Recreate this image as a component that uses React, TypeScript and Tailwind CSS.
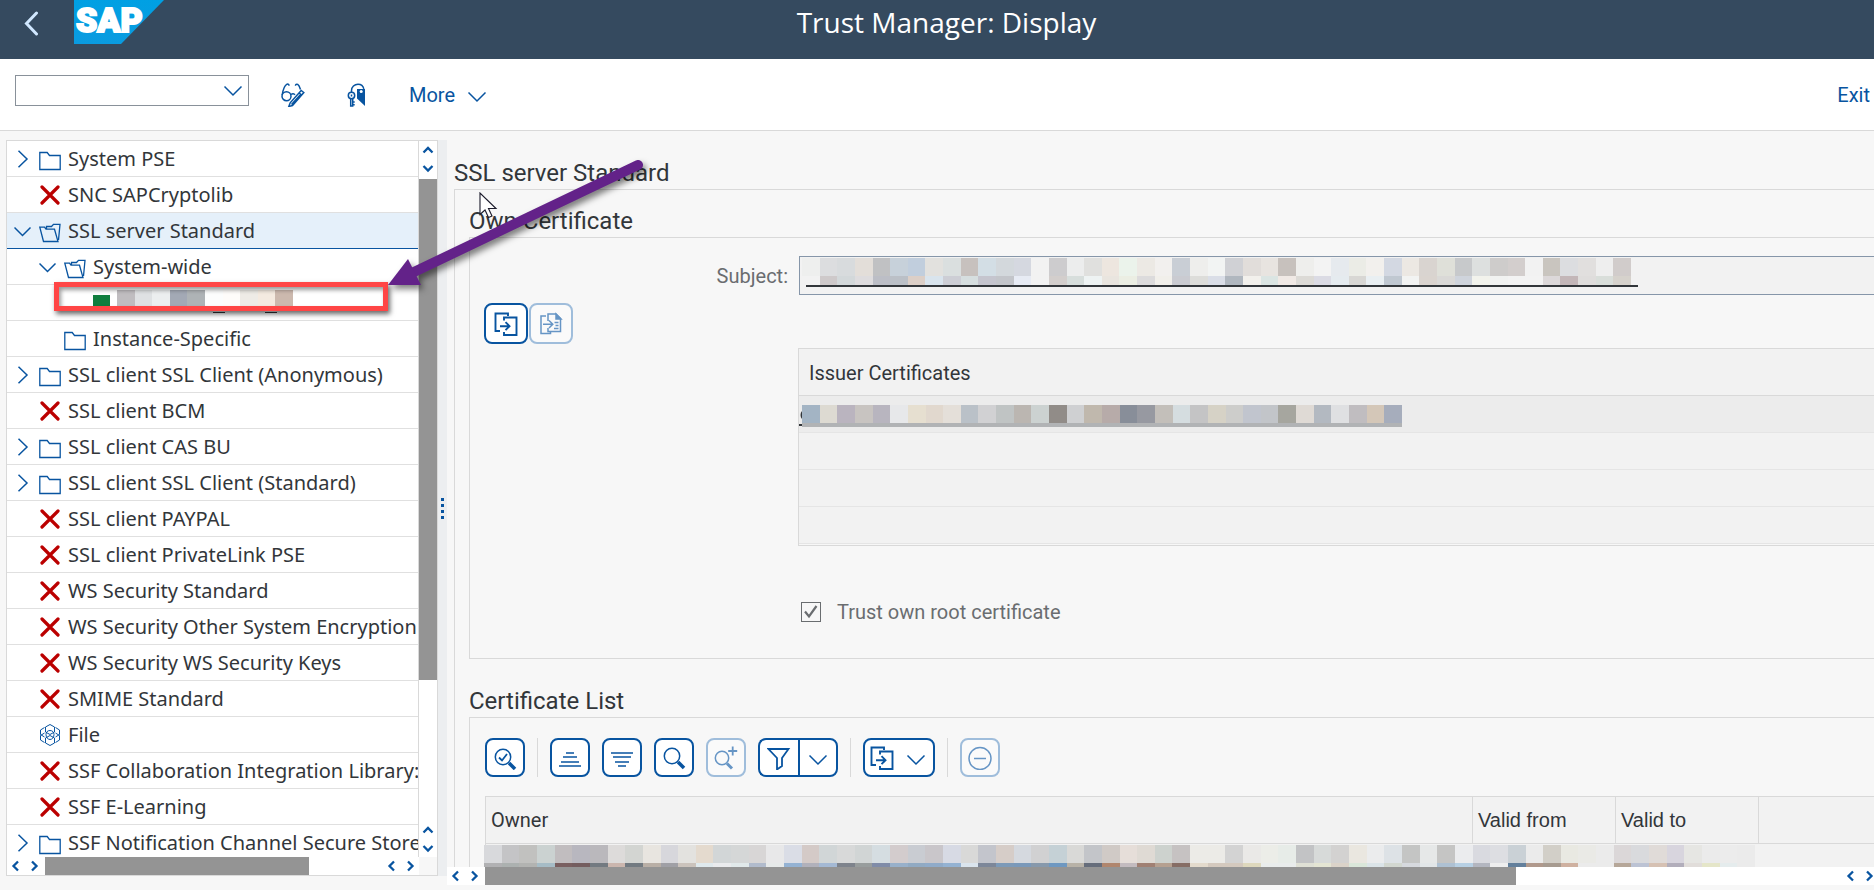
import type { ReactNode } from 'react';

type Kind = 'closed' | 'open' | 'error' | 'file' | 'leaf' | 'redacted';
type TreeRow = { label: string; kind: Kind; level: number; toggle?: 'right' | 'down'; selected?: boolean };

const tree: TreeRow[] = [
  { label: 'System PSE', kind: 'closed', level: 0, toggle: 'right' },
  { label: 'SNC SAPCryptolib', kind: 'error', level: 0 },
  { label: 'SSL server Standard', kind: 'open', level: 0, toggle: 'down', selected: true },
  { label: 'System-wide', kind: 'open', level: 1, toggle: 'down' },
  { label: '', kind: 'redacted', level: 2 },
  { label: 'Instance-Specific', kind: 'leaf', level: 1 },
  { label: 'SSL client SSL Client (Anonymous)', kind: 'closed', level: 0, toggle: 'right' },
  { label: 'SSL client BCM', kind: 'error', level: 0 },
  { label: 'SSL client CAS BU', kind: 'closed', level: 0, toggle: 'right' },
  { label: 'SSL client SSL Client (Standard)', kind: 'closed', level: 0, toggle: 'right' },
  { label: 'SSL client PAYPAL', kind: 'error', level: 0 },
  { label: 'SSL client PrivateLink PSE', kind: 'error', level: 0 },
  { label: 'WS Security Standard', kind: 'error', level: 0 },
  { label: 'WS Security Other System Encryption', kind: 'error', level: 0 },
  { label: 'WS Security WS Security Keys', kind: 'error', level: 0 },
  { label: 'SMIME Standard', kind: 'error', level: 0 },
  { label: 'File', kind: 'file', level: 0 },
  { label: 'SSF Collaboration Integration Library:', kind: 'error', level: 0 },
  { label: 'SSF E-Learning', kind: 'error', level: 0 },
  { label: 'SSF Notification Channel Secure Store', kind: 'closed', level: 0, toggle: 'right' },
];

const subjectTop =
  'eeefee dcdddf d8dbdd e3ded9 c0c1c3 c7d1da c1cedd e2e1de dadfdf c7c1be d3dee5 d3d8dc d5d8e0 f2f2f2 cdccce eceded e0e0de ede6df ebf3eb ece9e4 f2f0ee c9ced5 eeeeec f2f4f3 d0d1d5 e1ddda e8e4e0 c7c1bd eeeeec f3f3f3 e6eaee ebece6 f2f0ed d3d8e2 ece8e3 d9d4d0 dfe0d9 c7c9cb dde0df cecccb d3cecd f2f2f2 c9c5bf dcdde0 e1dfde eeeeee d1cccb';
const subjectBottom =
  'f2f2f2 cec9ca d3d8da dedcde bcbec6 bbc0c7 dccfc7 d9e4ed cdced5 d6dedf c5c5ce c3c5ca e7ebf4 f2f2f2 d3cecc d7dedc eef3f3 e9e5df ebeee3 dcdbdc f1efea cacbd1 ddddda dadee7 b0b7bf f2f0ec dbe5e3 f0e9e5 dcdad6 dbdbe4 e5ebef d8d7d4 e9eff2 c0c8d1 f2f3f2 dad4cf dad9d7 cfd4dc f2f3ec f1f2f1 f3f3f3 f3f3f3 dcd8d9 c3b6b8 dfdddc d9deda d6d2cc';
const issuerCells =
  'a3b4c4 dddad2 bab4bf c8c4c1 b8b5bf e7e8ea e6dfd0 e1d8ce e4dfd9 bac1c8 d1d1d3 c0c4c4 bbb6b1 ccd2d1 918c88 cfd0d2 c0b8ad b7aba9 888e99 9799a1 c3bfba d5dde0 c4c4c5 d6d2c6 cdcdcb c1c5ce c2c5c9 a6a69f dfdad5 b3b9c1 dfe0e2 c0bdc0 d4c7b8 a6adbc';
const ownerTop =
  'd8d9dc c4c4c6 c1c1bf cbd2d1 c1bdbf b8b7bf bab8bc dddbda d3d5d2 e8e5e0 d7d7dc e3e2df e4dace d2d6d7 d5d7d7 d8d6d6 e8e8e9 dadde6 d4cac7 d1d6d7 d8d9d9 d1d5d5 d5dde1 d3cccd c9ccd2 c9c6ca d7dae4 d9d9d8 c3c5cc d6cdc8 d5d9df d1d1d2 c5d1d6 d9d9d7 c3c5c9 d0cac6 e6ded9 dfdad4 cdd2ce c6c2c2 ecebe7 ecebe7 d3d3d3 eae9e7 ecede8 e7ece8 c2c3c5 d7dad9 d3d2d1 eae7e0 ebeced dde2e6 c4c5c4 e6e8e8 c5c5c4 ebecee d9dae0 dddee2 cad1d6 ebebeb d2cfc8 e9e9e2 eaeae6 ebebeb dbd7d8 d9dadd e0dbd8 d8d5de e6e6e3 ebebeb ececec ebebeb';
const ownerBottom =
  'b1b1b3 acb1b0 b2b3b1 a6bcc6 795f60 745d5f 737a81 cbb6ae 727a81 b9afa6 a0a0a6 cbc3bc dfe9ed eaebed e1e9ea b1bbcc e6e9e9 94b2d3 b1b1bb a4b9d4 7e838c 989d9d 808ca8 98b0ca 91aac3 90abc9 94b2d2 dae4ed 7d8799 7d9ab8 7a99ba 8799ac 6e98c1 b8b2a7 666d7b b0866e c3bbbf a08073 b5a090 866d65 e3dacc d4c9be d4c9be ded8bd e9ecec e9ecec dfe0d5 e4e5d3 dbd3c9 dae7da dbe4e8 d2d7d0 d6d9de e2e6e8 aec1d3 b7d0e4 b3b6c0 eeeeee 63809c b0998c a79b90 cfb1a0 ebebeb ebebeb b6a799 bcc3d4 d6c1b3 b2aebb e1ddda e5e6c9 e5eced ebebeb';
const treeCells = 'c0bdc0 dfe1e3 eceeef a3a9b5 aeb3b6 fcfdfd fefcfa eeebe6 f4eae0 ccb9ae';

/* Pixelated strips that cover confidential values. */
function Mosaic({ bands, width, className }: { bands: [string, number][]; width: number; className?: string }) {
  const height = bands.reduce((sum, b) => sum + b[1], 0);
  let top = 0;
  return (
    <svg width={width} height={height} className={className} shapeRendering="crispEdges" aria-hidden="true">
      {bands.map(([cells, h], i) => {
        const list = cells.split(' ');
        const y = top;
        top += h;
        const step = width / list.length;
        return list.map((c, k) => <rect key={i + '-' + k} x={k * step} y={y} width={step} height={h} fill={'#' + c} />);
      })}
    </svg>
  );
}

function Icon({ children, className = '' }: { children: ReactNode; className?: string }) {
  return (
    <svg width="24" height="24" viewBox="0 0 24 24" fill="none" stroke="currentColor" strokeWidth="1.5" className={'shrink-0 ' + className} aria-hidden="true">
      {children}
    </svg>
  );
}

const ChevronDown = ({ className = '' }: { className?: string }) => (
  <Icon className={className}>
    <path d="M3.5 9.5 12 18l8.5-8.5" />
  </Icon>
);

const ExportIcon = () => (
  <Icon>
    <path strokeWidth="1.9" d="M14 4V1.5H1.5V19H6M10 8.500V5.500h12.500V23H10v-3M6 14.200h9.500M11.500 10.200l4 4-4 4" />
  </Icon>
);

function SmallArrow({ dir }: { dir: 'up' | 'down' | 'left' | 'right' }) {
  const d = { up: 'M4.500 11.500 9 7l4.500 4.500', down: 'M4.500 7 9 11.500 13.500 7', left: 'M11 4.500 6.500 9l4.500 4.500', right: 'M7 4.500 11.500 9 7 13.500' }[dir];
  return (
    <button type="button" aria-label={'Scroll ' + dir} className="block size-[18px] shrink-0">
      <svg width="18" height="18" fill="none" stroke="#0854a0" strokeWidth="2.300" aria-hidden="true">
        <path d={d} />
      </svg>
    </button>
  );
}

function HScroll({ thumb, className = '' }: { thumb: string; className?: string }) {
  return (
    <div className={'flex h-[18px] shrink-0 bg-white ' + className}>
      <SmallArrow dir="left" />
      <SmallArrow dir="right" />
      <div className="ml-0.5 flex-1">
        <div className={'h-full bg-[#949494] ' + thumb} />
      </div>
      <SmallArrow dir="left" />
      <SmallArrow dir="right" />
    </div>
  );
}

function TreeIcon({ kind }: { kind: Kind }) {
  if (kind === 'error')
    return (
      <svg width="22" height="20" fill="none" stroke="#bb0000" strokeWidth="3.200" className="shrink-0" aria-hidden="true">
        <path d="M3 2 19 18M19 2 3 18" strokeLinecap="round" />
      </svg>
    );
  if (kind === 'open')
    return (
      <svg width="22" height="20" fill="none" stroke="#0854a0" strokeWidth="1.300" className="mt-1 shrink-0" aria-hidden="true">
        <path d="M.8 4.200h4.700l1.500 2h8.500L19 18.500H4.500zM7.500 6V3.500h5l2-2.200h6.500L19.500 17" />
      </svg>
    );
  if (kind === 'file')
    return (
      <svg width="22" height="24" viewBox="0 0 22 24" fill="none" stroke="#0854a0" strokeWidth="1" className="shrink-0" aria-hidden="true">
        <path d="M11 1.500l4.500 2.500v5L11 11.500 6.500 9V4zM11 12.500l4.500 2.500v5L11 22.500 6.500 20v-5zM5.500 4.500 1.500 7v4.500l4 2.500M16.500 4.500l4 2.500v4.500l-4 2.500M5.500 10l-4 2.500V17l4 2.500M16.500 10l4 2.500V17l-4 2.500" />
        <path d="M11 7.500c2.500 0 4 1.700 4 4s-1.500 5-4 5-4-2.700-4-5 1.500-4 4-4z" />
      </svg>
    );
  return (
    <svg width="22" height="20" fill="none" stroke="#0854a0" strokeWidth="1.300" className="mt-1 shrink-0" aria-hidden="true">
      <path d="M.8 18.500V1.500h7.400l2.300 3h10.700v14z" />
    </svg>
  );
}

const indent = ['pl-[7px]', 'pl-8', 'pl-[86px]'];

function Row({ row }: { row: TreeRow }) {
  const line = row.selected ? 'border-[#0854a0] bg-[#e5f0fa]' : 'border-[#e0e0e0]';
  if (row.kind === 'redacted')
    return (
      <li className={'flex h-9 shrink-0 gap-[7px] border-b pt-[5px] ' + line + ' ' + indent[row.level]}>
        <span className="mt-[5px] h-3.5 w-[17px] bg-[#107e3e]" />
        <div>
          <Mosaic bands={[[treeCells, 17]]} width={176} />
          <div className="flex gap-10 pt-[5px] pl-24">
            <span className="h-px w-3 bg-[#32363a]" />
            <span className="h-px w-3 bg-[#32363a]" />
          </div>
        </div>
      </li>
    );
  return (
    <li className={'flex h-9 shrink-0 items-center border-b whitespace-nowrap ' + line + ' ' + indent[row.level]}>
      {row.toggle ? (
        <button type="button" aria-label={'Toggle ' + row.label} className="mr-2 w-[17px] shrink-0">
          <svg width="18" height="18" fill="none" stroke="#0854a0" strokeWidth="1.500" aria-hidden="true">
            <path d={row.toggle === 'right' ? 'M4.500 .8 13 9 4.500 17.200' : 'M.5 5.500 8.500 13.500l8-8'} />
          </svg>
        </button>
      ) : (
        <span className="mr-2 w-[17px] shrink-0" />
      )}
      <TreeIcon kind={row.kind} />
      <span className="ml-[7px]">{row.label}</span>
    </li>
  );
}

const btn = 'flex items-center justify-center rounded-lg border-2 bg-white text-[#0854a0] border-[#0854a0]';
const btnOff = 'flex items-center justify-center rounded-lg border-2 bg-[#fafafa] text-[#6695c5] border-[#9fbddb]';
const tool = ' h-[39px] w-10 shrink-0';

const Separator = () => <span className="h-[39px] w-px bg-[#d9d9d9]" />;

export default function App() {
  return (
    <div className="relative flex h-screen flex-col overflow-hidden bg-[#f7f7f7] font-['Roboto',sans-serif] text-xl text-[#32363a]">
      <header className="flex h-[59px] shrink-0 items-start bg-[#354a5f] font-['Open_Sans',sans-serif] text-white">
        <button type="button" aria-label="Back" className="mt-2.5 ml-5 h-7 w-[54px] text-[#d1e8ff]">
          <svg width="22" height="26" fill="none" stroke="currentColor" strokeWidth="3" aria-hidden="true">
            <path d="M16.500 2 6.500 12.500l10 10.500" strokeLinecap="round" />
          </svg>
        </button>
        <div className="relative h-11 w-[90px]">
          <svg width="90" height="44" className="block" aria-hidden="true">
            <defs>
              <linearGradient id="logo" x1="0" y1="0" x2="0" y2="1">
                <stop offset="0" stopColor="#00a0e3" />
                <stop offset="1" stopColor="#0a9be0" />
              </linearGradient>
            </defs>
            <path d="M0 0h90L47 44H0z" fill="url(#logo)" />
          </svg>
          <span className="absolute top-0 left-0.5 font-['Roboto',sans-serif] text-[34px] leading-10 font-black [-webkit-text-stroke:2px_white]">SAP</span>
        </div>
        <h1 className="flex-1 pt-0.5 pr-[145px] text-center text-[28px] leading-10">Trust Manager: Display</h1>
      </header>

      <div className="flex h-[72px] shrink-0 items-start border-b border-[#d9d9d9] bg-white pt-4 pr-1 pl-[15px] text-[#0854a0]">
        <div className="relative">
          <select aria-label="Command" className="h-[31px] w-[234px] appearance-none border border-[#89919a] bg-white">
            <option></option>
          </select>
          <ChevronDown className="pointer-events-none absolute top-0.5 right-1" />
        </div>
        <div className="flex h-10 flex-1 items-center">
          <button type="button" aria-label="Display or change" className="ml-8">
            <Icon>
              <circle cx="5.500" cy="13.200" r="4.500" />
              <path d="M1.200 12C2 7 3.500 2.500 6 1.200c1.200-.5 2 .3 2 1.600M10 11.500c1.500-1.200 3-1 4 .3M14.500 2.800c0-1.300 1-2 2.200-1.400 1.300.8 2 2.600 2.800 5M22.800 9.500l-2.600-2-11 12.300-1.400 3.700 3.700-1zM20.700 12l-2.500-2M10.500 21.500l9.300-10.300" />
            </Icon>
          </button>
          <button type="button" aria-label="Change password" className="ml-[42px]">
            <Icon>
              <circle cx="4.500" cy="12.500" r="3.200" />
              <path d="M3.700 15.800V23h2v-7.200M5.700 19h2M5.700 21.700h2M4.500 11.500v2M4.500 9V7.500C4.500 4 7.500 1.200 11 1.200c3 0 5.200 1.800 5.800 4.600" />
              <path d="M10 6h8v17L10 15.500z" fill="currentColor" stroke="none" />
              <circle cx="14.200" cy="8.600" r="1.500" fill="#fff" stroke="none" />
            </Icon>
          </button>
          <button type="button" className="ml-[38px] flex items-center gap-2.5">
            More <ChevronDown />
          </button>
          <button type="button" className="ml-auto">Exit</button>
        </div>
      </div>

      <div className="flex min-h-0 flex-1">
        <nav aria-label="PSE tree" className="mt-[9px] mb-3.5 ml-1.5 flex w-[432px] shrink-0 flex-col border border-[#d9d9d9] font-['Noto_Sans',sans-serif]">
          <div className="flex min-h-0 flex-1 bg-white">
            <ul className="flex min-w-0 flex-1 flex-col overflow-hidden border-r border-[#d9d9d9]">
              {tree.map((r, i) => (
                <Row key={i} row={r} />
              ))}
            </ul>
            <div className="flex w-[18px] shrink-0 flex-col">
              <SmallArrow dir="up" />
              <SmallArrow dir="down" />
              <div className="mt-0.5 flex-1">
                <div className="h-[78%] bg-[#949494]" />
              </div>
              <SmallArrow dir="up" />
              <SmallArrow dir="down" />
            </div>
          </div>
          <HScroll thumb="w-[78%]" className="mr-[18px]" />
        </nav>

        <div className="mt-[9px] mb-3.5 flex w-[9px] shrink-0 flex-col items-center justify-center gap-[3px] bg-[#eceef0]">
          {[0, 1, 2, 3].map((k) => (
            <span key={k} className="size-[3px] bg-[#0854a0]" />
          ))}
        </div>

        <main className="mb-[5px] flex min-w-0 flex-1 flex-col overflow-hidden">
          <div className="flex min-h-0 flex-1 flex-col overflow-hidden pl-[7px]">
            <h2 className="shrink-0 pt-[26px] text-2xl leading-8">SSL server Standard</h2>
            <div className="flex min-h-0 flex-1 flex-col border-t border-l border-[#d9d9d9] pl-3.5">
              <h3 className="shrink-0 pt-[15px] text-2xl leading-8">Own Certificate</h3>
              <section className="shrink-0 border-y border-l border-[#d9d9d9] pt-[18px] pb-9">
                <div className="flex items-center gap-[11px]">
                  <label htmlFor="subject" className="w-[318px] shrink-0 text-right text-[#6a6d70]">Subject:</label>
                  <div className="relative flex-1">
                    <input id="subject" readOnly className="block h-[39px] w-full border border-r-0 border-[#8696a9] bg-[#f2f2f2]" />
                    <Mosaic bands={[[subjectTop, 18], [subjectBottom, 9]]} width={829} className="absolute top-0.5 left-[3px]" />
                    <span className="absolute top-[29px] left-[7px] h-0.5 w-[832px] bg-[#32363a]" />
                  </div>
                </div>
                <div className="mt-2 ml-3.5 flex gap-px">
                  <button type="button" aria-label="Export certificate" className={btn + ' h-[41px] w-11'}>
                    <ExportIcon />
                  </button>
                  <button type="button" aria-label="Import response" disabled className={btnOff + ' h-[41px] w-11'}>
                    <Icon>
                      <path d="M7 4H2v17.500H11.500V20M9 9V2h8l4.500 4.500V19.500H9V16M4 12.200h9.500M10 8.500l3.800 3.700L10 16M15.500 10.500h4M16.500 13.500h3M15 16.500h4.500" />
                      <path d="M17 2v5h5z" fill="currentColor" />
                    </Icon>
                  </button>
                </div>
                <div className="mt-1 ml-[328px] border border-r-0 border-[#d9d9d9] bg-[#f2f2f2]">
                  <table className="w-full border-separate border-spacing-0">
                    <thead>
                      <tr>
                        <th className="h-[47px] border-b border-[#d9d9d9] p-0 pt-0.5 pl-2.5 text-left font-normal">Issuer Certificates</th>
                      </tr>
                    </thead>
                    <tbody>
                      <tr>
                        <td className="h-[37px] border-b border-[#e5e5e5] bg-[#ececec] p-0 pt-[3px]">
                          <div className="flex">
                            <svg width="3" height="22" aria-hidden="true">
                              <path d="M3 6C1 8 1 12 3 14z" fill="#32363a" />
                              <path d="M0 19h3v2H0z" fill="#32363a" />
                            </svg>
                            <Mosaic bands={[[issuerCells, 18], ['b1b3b5', 4]]} width={600} />
                          </div>
                        </td>
                      </tr>
                      {[1, 2, 3].map((k) => (
                        <tr key={k}>
                          <td className="h-[37px] border-b border-[#e5e5e5] p-0" />
                        </tr>
                      ))}
                    </tbody>
                  </table>
                  <div className="h-px bg-[#f7f7f7]" />
                </div>
                <label className="mt-14 ml-[331px] flex h-5 items-center gap-4 text-[#6a6d70]">
                  <span className="relative flex">
                    <input type="checkbox" defaultChecked disabled className="peer size-5 appearance-none border border-[#6a6d70]" />
                    <svg width="20" height="20" fill="none" stroke="#6a6d70" strokeWidth="2.200" className="pointer-events-none absolute inset-0 hidden peer-checked:block" aria-hidden="true">
                      <path d="M4 9.500 8 14.500 15.500 4" />
                    </svg>
                  </span>
                  Trust own root certificate
                </label>
              </section>
              <h3 className="shrink-0 pt-[26px] text-2xl leading-8">Certificate List</h3>
              <section className="min-h-0 flex-1 overflow-hidden border-t border-l border-[#d9d9d9] pt-5 pl-[15px]">
                <div className="flex gap-3">
                  <button type="button" aria-label="Details" className={btn + tool}>
                    <Icon>
                      <circle cx="10" cy="11" r="7.700" />
                      <path d="M6 11.500l3 3L14 8" strokeWidth="1.800" />
                      <path d="M16 17l6 6" strokeWidth="3.500" />
                    </Icon>
                  </button>
                  <Separator />
                  <button type="button" aria-label="Sort ascending" className={btn + tool}>
                    <Icon>
                      <path d="M8 7h8M5 11h14M3 16h18M1 20h22" />
                    </Icon>
                  </button>
                  <button type="button" aria-label="Sort descending" className={btn + tool}>
                    <Icon>
                      <path d="M1 7h22M3 11h18M5 16h14M8 20h8" />
                    </Icon>
                  </button>
                  <button type="button" aria-label="Find" className={btn + tool}>
                    <Icon>
                      <circle cx="10" cy="10" r="7.700" />
                      <path d="M16 16l6 6" strokeWidth="3.500" />
                    </Icon>
                  </button>
                  <button type="button" aria-label="Find next" disabled className={btnOff + tool}>
                    <Icon>
                      <circle cx="8" cy="12" r="6.700" />
                      <path d="M18.700.5v9M14.200 5h9" strokeWidth="1.800" />
                      <path d="M13 17.500l5 5" strokeWidth="3" />
                    </Icon>
                  </button>
                  <div className="flex">
                    <button type="button" aria-label="Filter" className={btn + tool + ' rounded-r-none border-r-0'}>
                      <Icon>
                        <path strokeWidth="1.800" d="M1.500 3h20L15 12v8l-5 3.500V12z" />
                      </Icon>
                    </button>
                    <button type="button" aria-label="Filter options" className={btn + tool + ' rounded-l-none'}>
                      <ChevronDown />
                    </button>
                  </div>
                  <Separator />
                  <button type="button" aria-label="Export list" className={btn + ' h-[39px] w-[72px] shrink-0 gap-2.5'}>
                    <ExportIcon />
                    <ChevronDown />
                  </button>
                  <Separator />
                  <button type="button" aria-label="Remove" disabled className={btnOff + tool}>
                    <Icon>
                      <circle cx="12" cy="12.500" r="11" />
                      <path d="M6 12.500h12" />
                    </Icon>
                  </button>
                </div>
                <table className="mt-[19px] w-full table-fixed border-separate border-spacing-0 border-t border-l border-[#d9d9d9] bg-[#f2f2f2] text-left">
                  <thead>
                    <tr className="h-[47px]">
                      <th className="border-r border-b border-[#d9d9d9] p-0 pl-[5px] font-normal">Owner</th>
                      <th className="w-[143px] border-r border-b border-[#d9d9d9] p-0 pl-[5px] font-['Liberation_Sans',sans-serif] font-normal">Valid from</th>
                      <th className="w-[143px] border-r border-b border-[#d9d9d9] p-0 pl-[5px] font-['Liberation_Sans',sans-serif] font-normal">Valid to</th>
                      <th className="w-[115px] border-b border-[#d9d9d9] p-0" />
                    </tr>
                  </thead>
                  <tbody>
                    <tr className="h-9 align-top">
                      <td colSpan={4} className="p-0 pt-px">
                        <Mosaic bands={[[ownerTop, 18], [ownerBottom, 14]]} width={1271} className="-ml-0.5 block" />
                      </td>
                    </tr>
                  </tbody>
                </table>
              </section>
            </div>
          </div>
          <HScroll thumb="w-[76%]" className="-mr-1" />
        </main>
      </div>

      {/* Annotation layer: highlight frame, arrow and mouse pointer. */}
      <div className="pointer-events-none absolute top-[282px] left-[54px] h-[29px] w-[334px] border-[5px] border-[#ff4545] shadow-[2px_3px_5px_rgba(0,0,0,0.6),inset_2px_3px_4px_rgba(0,0,0,0.4)]" />
      <svg width="280" height="150" className="pointer-events-none absolute top-[150px] left-[380px] drop-shadow-[3px_4px_3px_rgba(0,0,0,0.5)]" aria-hidden="true">
        <path d="M258 15 34 122" stroke="#632289" strokeWidth="10" strokeLinecap="round" />
        <path d="M8 135 28 109 41 135z" fill="#632289" />
      </svg>
      <svg width="20" height="28" className="pointer-events-none absolute top-48 left-[479px]" aria-hidden="true">
        <path d="M1 1v21.500l5-4.500 3.500 7.500 3.500-1.500-3.500-7.500h7.500z" fill="#fff" stroke="#1b1b2b" strokeWidth="1.100" />
      </svg>
    </div>
  );
}
